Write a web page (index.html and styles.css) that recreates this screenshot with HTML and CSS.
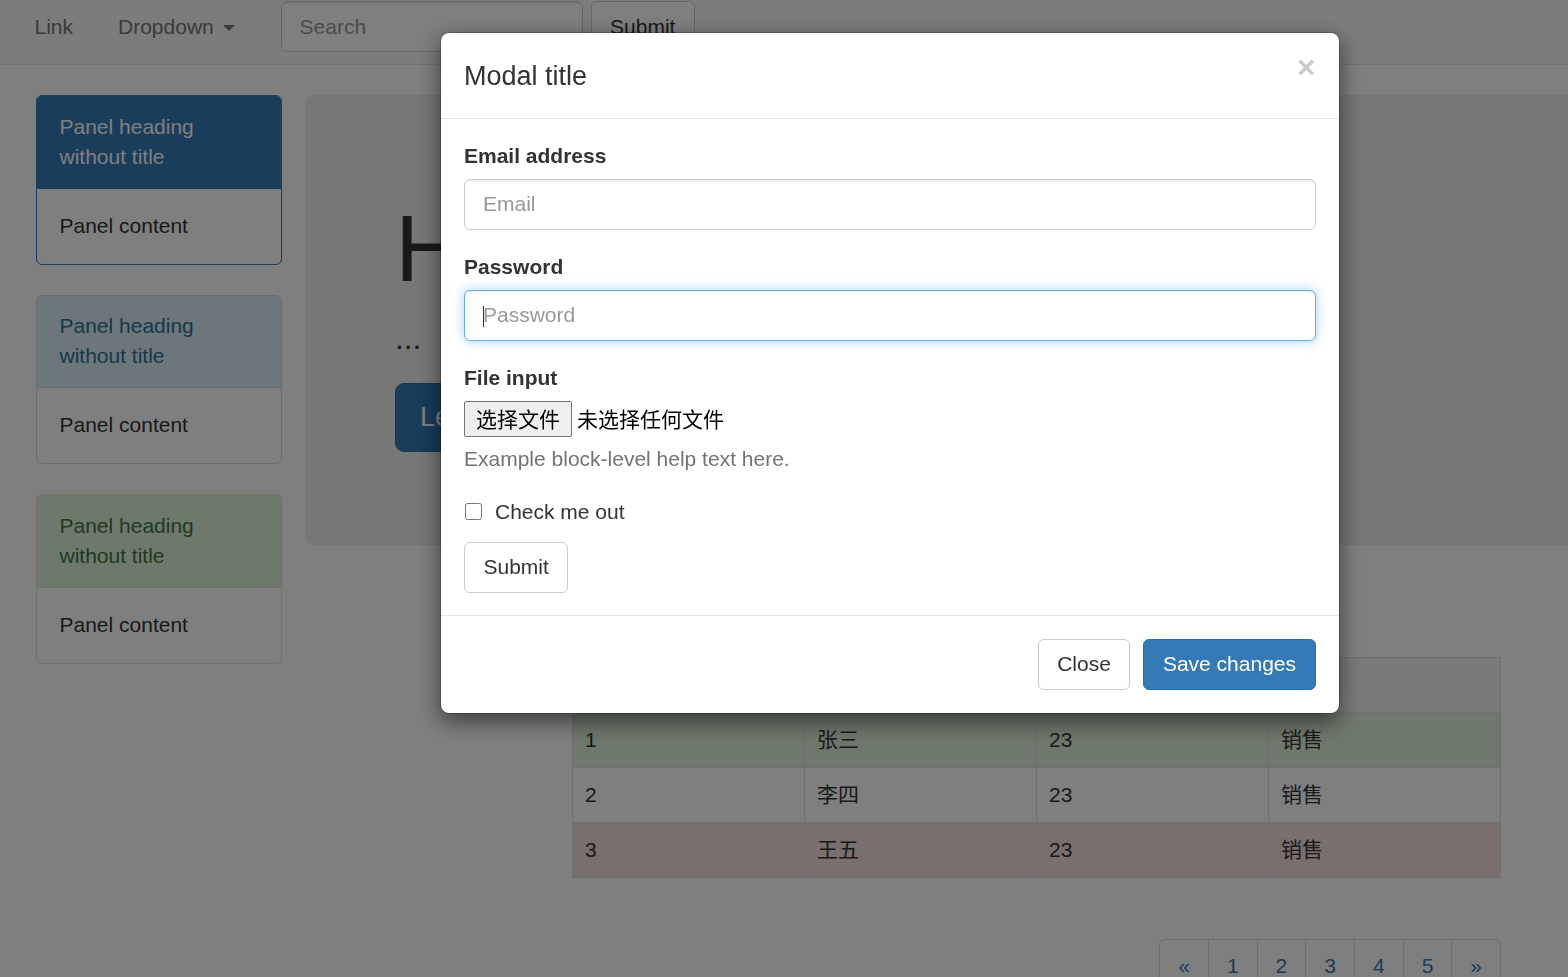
FILE: index.html
```html
<!DOCTYPE html>
<html lang="zh-CN">
<head>
<meta charset="utf-8">
<title>Bootstrap modal</title>
<link rel="stylesheet" href="styles.css">
</head>
<body>
<nav class="navbar">
  <ul class="nav">
    <li><a href="#">Link</a></li>
    <li><a href="#">Dropdown <span class="caret"></span></a></li>
  </ul>
  <form class="navbar-form">
    <input class="form-control search" type="text" placeholder="Search">
    <button type="button" class="btn btn-default">Submit</button>
  </form>
</nav>

<main class="main">
  <aside class="side">
    <div class="panel panel-primary">
      <div class="panel-heading">Panel heading without title</div>
      <div class="panel-body">Panel content</div>
    </div>
    <div class="panel panel-info">
      <div class="panel-heading">Panel heading without title</div>
      <div class="panel-body">Panel content</div>
    </div>
    <div class="panel panel-success">
      <div class="panel-heading">Panel heading without title</div>
      <div class="panel-body">Panel content</div>
    </div>
  </aside>

  <section class="content">
    <div class="jumbotron">
      <h1>Hello, world!</h1>
      <p>...</p>
      <p class="jumbo-actions"><a class="btn btn-primary btn-lg" href="#">Learn more</a></p>
    </div>

    <div class="table-wrap">
      <table class="table">
        <thead>
          <tr class="active"><th>#</th><th>姓名</th><th>年龄</th><th>部门</th></tr>
        </thead>
        <tbody>
          <tr class="success"><td>1</td><td>张三</td><td>23</td><td>销售</td></tr>
          <tr><td>2</td><td>李四</td><td>23</td><td>销售</td></tr>
          <tr class="danger"><td>3</td><td>王五</td><td>23</td><td>销售</td></tr>
        </tbody>
      </table>
      <ul class="pagination">
        <li><a href="#">&laquo;</a></li>
        <li><a href="#">1</a></li>
        <li><a href="#">2</a></li>
        <li><a href="#">3</a></li>
        <li><a href="#">4</a></li>
        <li><a href="#">5</a></li>
        <li><a href="#">&raquo;</a></li>
      </ul>
    </div>
  </section>
</main>

<div class="modal-backdrop"></div>

<div class="modal">
  <div class="modal-header">
    <h4 class="modal-title">Modal title</h4>
    <span class="close">&times;</span>
  </div>
  <div class="modal-body">
    <div class="form-group">
      <label>Email address</label>
      <input class="form-control" type="email" placeholder="Email">
    </div>
    <div class="form-group">
      <label>Password</label>
      <div class="input-wrap">
        <input class="form-control focus" type="password" placeholder="Password">
        <span class="caret-cursor"></span>
      </div>
    </div>
    <div class="form-group">
      <label>File input</label>
      <div class="file-input">
        <span class="file-btn">选择文件</span>
        <span class="file-name">未选择任何文件</span>
      </div>
      <p class="help-block">Example block-level help text here.</p>
    </div>
    <div class="checkbox">
      <input type="checkbox" id="chk">
      <label for="chk" class="chk-label">Check me out</label>
    </div>
    <button type="button" class="btn btn-default">Submit</button>
  </div>
  <div class="modal-footer">
    <button type="button" class="btn btn-default">Close</button>
    <button type="button" class="btn btn-primary">Save changes</button>
  </div>
</div>
</body>
</html>
```

FILE: styles.css
```css
* { box-sizing: border-box; }

html, body {
  margin: 0;
  padding: 0;
  overflow: hidden;
  height: 100%;
}

body {
  font-family: "Liberation Sans", Arial, "Noto Sans CJK SC", sans-serif;
  font-size: 21px;
  line-height: 30px;
  color: #333;
  background: #fff;
}

a { text-decoration: none; }

/* ---------- navbar ---------- */
.navbar {
  display: flex;
  align-items: flex-start;
  height: 65px;
  padding-left: 12px;
  background: #f8f8f8;
  border-bottom: 1px solid #e7e7e7;
}

.nav {
  display: flex;
  list-style: none;
  margin: 0;
  padding: 0;
}

.nav a {
  display: block;
  padding: 11.5px 22.5px 22.5px;
  color: #777;
  line-height: 30px;
}

.caret {
  display: inline-block;
  width: 0;
  height: 0;
  margin-left: 3px;
  vertical-align: middle;
  border-top: 6px solid #777;
  border-left: 6px solid transparent;
  border-right: 6px solid transparent;
}

.navbar-form {
  display: flex;
  gap: 8px;
  margin: 0;
  padding: 1px 22.5px 0 23.5px;
}

.navbar-form .search {
  flex: none;
  width: 302px;
}

/* ---------- buttons ---------- */
.btn {
  display: inline-block;
  height: 51px;
  padding: 9px 18.5px;
  font-family: inherit;
  font-size: 21px;
  line-height: 30px;
  border: 1px solid transparent;
  border-radius: 6px;
  white-space: nowrap;
  cursor: pointer;
}

.btn-default {
  color: #333;
  background: #fff;
  border-color: #ccc;
}

.btn-primary {
  color: #fff;
  background: #337ab7;
  border-color: #2e6da4;
}

.btn-lg {
  height: 69px;
  padding: 15px 24px;
  font-size: 27px;
  line-height: 36px;
  border-radius: 9px;
}

/* ---------- layout ---------- */
.main {
  display: flex;
  padding: 30px 0 0 36px;
}

.side {
  flex: 0 0 246px;
  margin-right: 23px;
}

.content {
  flex: 1;
  min-width: 0;
}

/* ---------- panels ---------- */
.panel {
  background: #fff;
  border: 1px solid #ddd;
  border-radius: 6px;
  margin-bottom: 30px;
}

.panel-heading {
  padding: 15.5px 22.5px 16px;
  border-bottom: 1px solid transparent;
  border-radius: 5px 5px 0 0;
}

.panel-body {
  padding: 22px 22.5px 23px;
}

.panel-primary { border-color: #337ab7; }
.panel-primary .panel-heading { color: #fff; background: #337ab7; border-color: #337ab7; }

.panel-info { border-color: #c6dde4; }
.panel-info .panel-heading { color: #31708f; background: #d9edf7; border-color: #c6dde4; }

.panel-success { border-color: #d6e9c6; }
.panel-success .panel-heading { color: #3c763d; background: #dff0d8; border-color: #d6e9c6; }

/* ---------- jumbotron ---------- */
.jumbotron {
  margin-right: -40px;
  padding: 72px 90px;
  background: #eee;
  border-radius: 9px;
}

.jumbotron h1 {
  margin: 30px 0 15px;
  font-size: 94.5px;
  line-height: 1.1;
  font-weight: 500;
  color: inherit;
  white-space: nowrap;
}

.jumbotron p {
  margin: 0 0 22.5px;
  font-size: 31.5px;
  line-height: 45px;
}

.jumbotron .jumbo-actions {
  display: flex;
  height: 69px;
  margin-bottom: 21px;
}

/* ---------- table ---------- */
.table-wrap {
  width: 929px;
  margin: 112px 0 0 267px;
}

.table {
  width: 100%;
  table-layout: fixed;
  border-collapse: collapse;
  border: 1px solid #ddd;
}

.table th,
.table td {
  padding: 12px;
  line-height: 30px;
  text-align: left;
  border: 1px solid #ddd;
  font-weight: bold;
}

.table td { font-weight: normal; }

.table tr.active { background: #f5f5f5; }
.table tr.success { background: #dff0d8; }
.table tr.danger { background: #f2dede; }

/* ---------- pagination ---------- */
.pagination {
  display: flex;
  justify-content: flex-end;
  list-style: none;
  margin: 61px 0 0;
  padding: 0;
}

.pagination a {
  display: block;
  margin-left: -1px;
  padding: 11px 18px 9px;
  line-height: 30px;
  color: #337ab7;
  background: #fff;
  border: 1px solid #ddd;
}

.pagination li:first-child a { border-radius: 6px 0 0 6px; }
.pagination li:last-child a { border-radius: 0 6px 6px 0; }

/* ---------- modal ---------- */
.modal-backdrop {
  position: fixed;
  inset: 0;
  z-index: 10;
  background: rgba(0, 0, 0, 0.5);
}

.modal {
  position: fixed;
  top: 32px;
  left: 440px;
  z-index: 11;
  width: 900px;
  background: #fff;
  background-clip: padding-box;
  border: 1px solid rgba(0, 0, 0, 0.2);
  border-radius: 9px;
  box-shadow: 0 7.5px 22.5px rgba(0, 0, 0, 0.5);
}

.modal-header {
  display: flex;
  justify-content: space-between;
  align-items: flex-start;
  padding: 23.5px 23.5px 22.5px 23px;
  border-bottom: 1px solid #e5e5e5;
}

.modal-title {
  margin: 0;
  font-size: 27px;
  line-height: 38.57px;
  font-weight: 500;
}

.close {
  margin-top: -5px;
  font-size: 31.5px;
  font-weight: bold;
  line-height: 1;
  color: #000;
  opacity: 0.2;
  text-shadow: 0 1px 0 #fff;
}

.modal-body {
  padding: 22.5px 23.5px 22.5px 23px;
}

.form-group {
  margin-bottom: 22.5px;
}

.form-group > label {
  display: block;
  margin-bottom: 7.5px;
  font-weight: bold;
}

.form-control {
  display: block;
  width: 100%;
  height: 51px;
  padding: 9px 18px;
  font-family: inherit;
  font-size: 21px;
  line-height: 30px;
  color: #555;
  background: #fff;
  border: 1px solid #ccc;
  border-radius: 6px;
  box-shadow: inset 0 1.5px 1.5px rgba(0, 0, 0, 0.075);
  outline: none;
}

.form-control::placeholder { color: #999; }

.form-control.focus {
  border-color: #66afe9;
  box-shadow: inset 0 1.5px 1.5px rgba(0, 0, 0, 0.075), 0 0 12px rgba(102, 175, 233, 0.6);
}

.input-wrap { position: relative; }

.caret-cursor {
  position: absolute;
  left: 19px;
  top: 16px;
  width: 1px;
  height: 21px;
  background: #333;
}

.file-input {
  display: flex;
  align-items: center;
  height: 36px;
  font-family: "Noto Sans CJK SC", "Liberation Sans", sans-serif;
  font-size: 21px;
  color: #000;
}

.file-btn {
  display: inline-flex;
  align-items: center;
  height: 36px;
  padding: 0 11px;
  background: #efefef;
  border: 1px solid #767676;
  border-radius: 2px;
  line-height: 1;
}

.file-name {
  margin-left: 5px;
  line-height: 1;
}

.help-block {
  margin: 7.5px 0 15px;
  color: #737373;
}

.checkbox {
  display: flex;
  align-items: center;
  margin: 15px 0;
}

.checkbox input {
  width: 17px;
  height: 17px;
  margin: 0 13px 0 1px;
}

.chk-label { font-weight: normal; }

.modal-footer {
  display: flex;
  justify-content: flex-end;
  gap: 13px;
  padding: 22.5px 23.5px 23.5px 23px;
  border-top: 1px solid #e5e5e5;
}
```
